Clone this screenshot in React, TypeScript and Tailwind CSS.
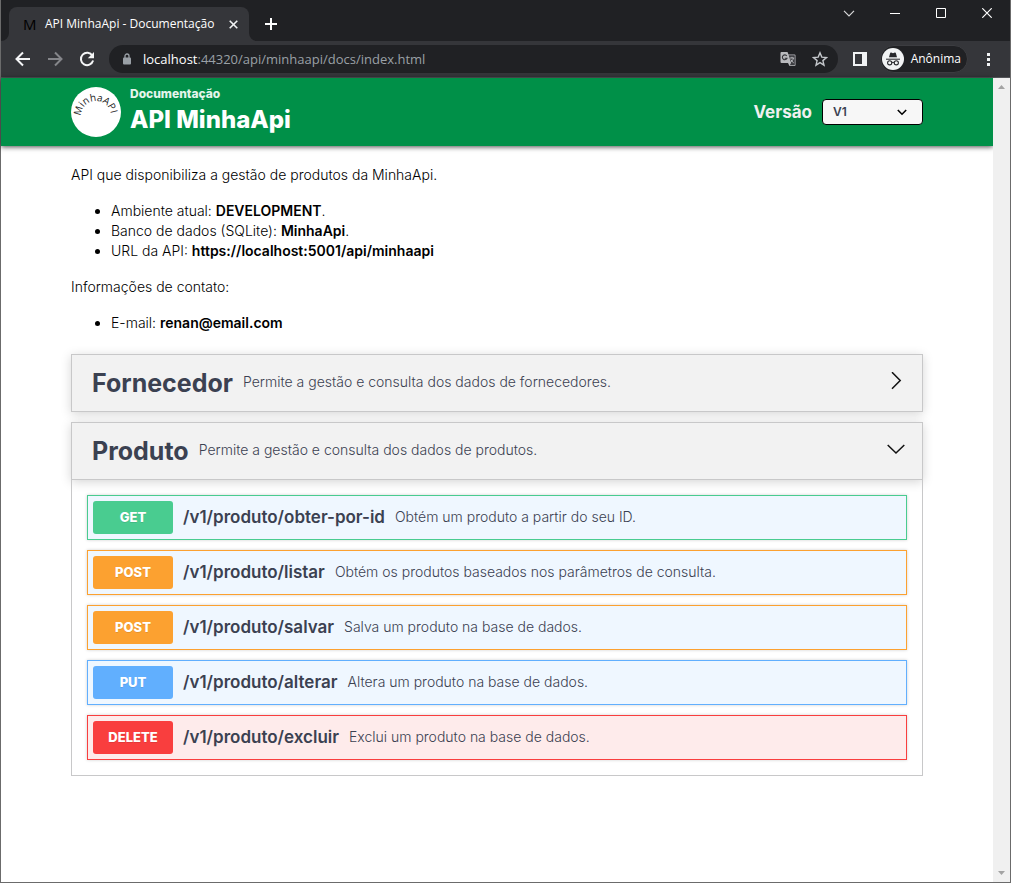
import React from "react";

const chromeFont = "font-['Open_Sans','Noto_Sans',sans-serif]";

type Operation = {
  method: string;
  path: string;
  summary: string;
  box: string;
  badge: string;
};

const operations: Operation[] = [
  {
    method: "GET",
    path: "/v1/produto/obter-por-id",
    summary: "Obtém um produto a partir do seu ID.",
    box: "border-[#49cc90] bg-[#eff7ff]",
    badge: "bg-[#49cc90]",
  },
  {
    method: "POST",
    path: "/v1/produto/listar",
    summary: "Obtém os produtos baseados nos parâmetros de consulta.",
    box: "border-[#fca130] bg-[#eff7ff]",
    badge: "bg-[#fca130]",
  },
  {
    method: "POST",
    path: "/v1/produto/salvar",
    summary: "Salva um produto na base de dados.",
    box: "border-[#fca130] bg-[#eff7ff]",
    badge: "bg-[#fca130]",
  },
  {
    method: "PUT",
    path: "/v1/produto/alterar",
    summary: "Altera um produto na base de dados.",
    box: "border-[#61affe] bg-[#eff7ff]",
    badge: "bg-[#61affe]",
  },
  {
    method: "DELETE",
    path: "/v1/produto/excluir",
    summary: "Exclui um produto na base de dados.",
    box: "border-[#f93e3e] bg-[#feebeb]",
    badge: "bg-[#f93e3e]",
  },
];

function TabStrip() {
  return (
    <div className="flex h-[41px] items-start justify-between bg-[#202124]">
      <div className="flex pl-2 pt-[7px]">
        <div className="relative flex h-[34px] w-60 items-center rounded-t-lg bg-[#35363a] pl-[14px] pr-2 text-white">
          <svg className="absolute -left-2 bottom-0 size-2" viewBox="0 0 8 8" aria-hidden="true">
            <path d="M8 0v8H0a8 8 0 0 0 8-8z" fill="#35363a" />
          </svg>
          <svg className="absolute -right-2 bottom-0 size-2" viewBox="0 0 8 8" aria-hidden="true">
            <path d="M0 0v8h8a8 8 0 0 1-8-8z" fill="#35363a" />
          </svg>
          <span className="w-[22px] text-[15px] leading-4 text-black">M</span>
          <span className="flex-1 whitespace-nowrap text-[12px] leading-4">API MinhaApi - Documentação</span>
          <button aria-label="Fechar guia" className="flex size-4 items-center justify-center">
            <svg className="size-[9px]" viewBox="0 0 9 9" stroke="#f1f3f4" strokeWidth="1.6">
              <path d="M.7.7l7.6 7.6M8.3.7L.7 8.3" />
            </svg>
          </button>
        </div>
        <button aria-label="Nova guia" className="ml-3 flex h-[34px] w-5 items-center justify-center">
          <svg className="size-3" viewBox="0 0 12 12" stroke="#fff" strokeWidth="2">
            <path d="M6 0v12M0 6h12" />
          </svg>
        </button>
      </div>
      <div className="flex h-[26px] items-center">
        <button aria-label="Pesquisar guias" className="flex w-[46px] justify-center">
          <svg className="h-[7px] w-3" viewBox="0 0 12 7" fill="none" stroke="#d8d9da" strokeWidth="1.2">
            <path d="M1 .8l5 5 5-5" />
          </svg>
        </button>
        <button aria-label="Minimizar" className="flex w-[46px] justify-center">
          <svg className="h-px w-[10px]" viewBox="0 0 10 1" fill="#fff">
            <path d="M0 0h10v1H0z" />
          </svg>
        </button>
        <button aria-label="Maximizar" className="flex w-[46px] justify-center">
          <svg className="size-[10px]" viewBox="0 0 10 10" fill="none" stroke="#fff">
            <path d="M.5.5h9v9h-9z" />
          </svg>
        </button>
        <button aria-label="Fechar" className="flex w-[46px] justify-center">
          <svg className="size-[10px]" viewBox="0 0 10 10" stroke="#fff" strokeWidth="1.2">
            <path d="M.3.3l9.4 9.4M9.7.3L.3 9.7" />
          </svg>
        </button>
      </div>
    </div>
  );
}

function Toolbar() {
  return (
    <div className="flex h-[37px] items-center border-b border-[#55565a] bg-[#35363a] pl-[14px] pr-[14px]">
      <div className="flex items-center gap-4">
        <button aria-label="Voltar">
          <svg className="size-4" viewBox="0 0 16 16" fill="none" stroke="#f5f6f7" strokeWidth="2">
            <path d="M15 8H2.5M8 1.5L1.5 8 8 14.500" />
          </svg>
        </button>
        <button aria-label="Avançar">
          <svg className="size-4" viewBox="0 0 16 16" fill="none" stroke="#85868a" strokeWidth="2">
            <path d="M1 8h12.500M8 1.500L14.500 8 8 14.500" />
          </svg>
        </button>
        <button aria-label="Recarregar">
          <svg className="size-4" viewBox="0 0 16 16">
            <path d="M13.400 4.700A6.200 6.200 0 1 0 14.100 9.600" fill="none" stroke="#f5f6f7" strokeWidth="2" />
            <path d="M15 1v6.200H8.800z" fill="#f5f6f7" />
          </svg>
        </button>
      </div>
      <div className="ml-[14px] flex h-7 flex-1 items-center rounded-full bg-[#202124] pl-[14px] pr-[10px]">
        <svg className="h-3 w-2" viewBox="0 0 8 12" aria-hidden="true">
          <path d="M2 5V3a2 2 0 0 1 4 0v2" fill="none" stroke="#9aa0a6" strokeWidth="1.300" />
          <rect y="4.500" width="8" height="7" rx="1" fill="#9aa0a6" />
        </svg>
        <div className="ml-3 flex-1 whitespace-nowrap text-[13px] leading-5 text-[#9aa0a6]">
          <span className="text-white">localhost</span>:44320/api/minhaapi/docs/index.html
        </div>
        <button aria-label="Traduzir esta página">
          <svg className="size-4" viewBox="0 0 16 16">
            <path d="M1.500 1h6l1 2.500h6a1 1 0 0 1 1 1V14a1 1 0 0 1-1 1h-5L8 12H1.500a1 1 0 0 1-1-1V2a1 1 0 0 1 1-1z" fill="#b9babd" />
            <path d="M8.700 4.300h5.600a.5.500 0 0 1 .5.500v8.900a.5.500 0 0 1-.5.500H9.800L11 12z" fill="#3c3d41" />
            <path d="M6.800 5A2.400 2.400 0 1 0 7 7.200H4.700" fill="none" stroke="#35363a" strokeWidth="1.100" />
            <path d="M9.800 7h4.400M12 5.800V7M13.400 7c-.3 2-1.600 3.500-3 4.300M10.800 8.500c.6 1.500 1.800 2.500 2.900 3.300" fill="none" stroke="#c4c5c8" strokeWidth=".9" />
          </svg>
        </button>
        <button aria-label="Adicionar aos favoritos" className="ml-4">
          <svg className="size-4" viewBox="0 0 16 16" fill="none" stroke="#c4c7cb" strokeWidth="1.400">
            <path d="M8 1.800l1.800 4.300 4.700.4-3.600 3.100 1.100 4.600L8 11.700l-4 2.500 1.100-4.600-3.600-3.100 4.700-.4z" />
          </svg>
        </button>
      </div>
      <button aria-label="Painel lateral" className="ml-[15px]">
        <svg className="size-[14px]" viewBox="0 0 14 14">
          <path d="M0 0h14v14H0z" fill="#f1f3f4" />
          <path d="M2 2h7v10H2z" fill="#35363a" />
        </svg>
      </button>
      <button className="ml-[13px] flex h-7 items-center gap-[7px] rounded-full border border-[#3c3d41] bg-[#202124] pl-px pr-[6px] text-[12px] leading-4 text-white">
        <svg className="size-[22px]" viewBox="0 0 22 22" aria-hidden="true">
          <circle cx="11" cy="11" r="11" fill="#f1f3f4" />
          <path d="M7 9.300l1.100-4.100c.1-.5.600-.8 1.100-.6l1.800.6 1.800-.6c.5-.2 1 .1 1.100.6L15 9.300z" fill="#27282c" />
          <path d="M4 11.200h14" stroke="#27282c" strokeWidth="1" />
          <g fill="none" stroke="#27282c" strokeWidth="1.100">
            <circle cx="7.700" cy="14.800" r="2.100" />
            <circle cx="14.300" cy="14.800" r="2.100" />
            <path d="M9.800 14.600q1.200-.8 2.400 0" />
          </g>
        </svg>
        Anônima
      </button>
      <button aria-label="Menu" className="ml-3 flex w-4 justify-center">
        <svg className="h-[13px] w-[3px]" viewBox="0 0 3 13" fill="#f1f3f4">
          <path d="M0 0h3v3H0zM0 5h3v3H0zM0 10h3v3H0z" />
        </svg>
      </button>
    </div>
  );
}

function Header() {
  return (
    <header className="flex h-[68px] shrink-0 items-center justify-between bg-[#009048] px-[70px] text-white shadow-[0_1px_5px_rgba(0,0,0,0.7)]">
      <div className="flex items-center gap-[9px]">
        <svg className="size-[50px]" viewBox="0 0 50 50" role="img" aria-label="MinhaAPI">
          <defs>
            <path id="logo-arc" d="M10 29A15 15 0 0 1 40 29V34" />
          </defs>
          <circle cx="25" cy="25" r="25" fill="#fff" />
          <text className="font-['Open_Sans',sans-serif] text-[10px]" fill="#222">
            <textPath href="#logo-arc">MinhaAPI</textPath>
          </text>
        </svg>
        <div className="flex flex-col gap-1 pb-1 font-extrabold">
          <span className="text-[12px] leading-4 text-[#e4f5ec]">Documentação</span>
          <h1 className="text-[24px] leading-7">API MinhaApi</h1>
        </div>
      </div>
      <div className="flex items-center gap-[10px]">
        <label htmlFor="version" className="text-[17px] font-bold leading-6 text-[#f0f0f0]">
          Versão
        </label>
        <div className="relative">
          <select
            id="version"
            className="block h-[26px] w-[101px] appearance-none rounded border border-black bg-[#f7f7f7] pl-[10px] text-[12px] font-semibold leading-4 text-[#3b4151]"
          >
            <option>V1</option>
          </select>
          <svg className="pointer-events-none absolute right-4 top-[10px] h-[7px] w-[10px]" viewBox="0 0 10 7" fill="none" stroke="#000" strokeWidth="1.600">
            <path d="M.8 1L5 5.200 9.200 1" />
          </svg>
        </div>
      </div>
    </header>
  );
}

function TagHeader({ name, text, open }: { name: string; text: string; open?: boolean }) {
  return (
    <button
      aria-expanded={!!open}
      className="flex h-[58px] w-full items-center border border-[#c8c8c9] bg-[#f2f2f2] pl-5 pr-[17px] text-left text-[#3b4151] shadow-[0_2px_10px_rgba(0,0,0,0.17)]"
    >
      <span className="text-[25px] font-bold leading-8">{name}</span>
      <span className="ml-[10px] flex-1 pb-0.5 text-[14px] font-light leading-5">{text}</span>
      <svg className="mb-1 size-[18px]" viewBox="0 0 18 18" fill="none" stroke="#111" strokeWidth="1.500">
        <path d={open ? "M.7 5L9 13 17.300 5" : "M5 .2L13.200 8.500 5 16.800"} />
      </svg>
    </button>
  );
}

function OperationRow({ op }: { op: Operation }) {
  return (
    <li>
      <button
        className={`flex h-[45px] w-full items-center border px-[5px] text-left text-[#3b4151] shadow-[0_0_3px_rgba(0,0,0,0.19)] ${op.box}`}
      >
        <span
          className={`flex h-[33px] w-20 items-center justify-center rounded-[3px] pb-0.5 text-[13px] font-extrabold leading-5 text-white [text-shadow:0_1px_0_rgba(0,0,0,0.1)] ${op.badge}`}
        >
          {op.method}
        </span>
        <span className="ml-[10px] pb-0.5 text-[17px] font-semibold leading-6">{op.path}</span>
        <span className="ml-[10px] pb-0.5 text-[14px] font-light leading-5">{op.summary}</span>
      </button>
    </li>
  );
}

function ScrollBar() {
  return (
    <div className="flex w-[17px] shrink-0 flex-col items-center justify-between bg-[#f0f0f0] py-[7px]" aria-hidden="true">
      <svg className="h-1 w-[7px]" viewBox="0 0 7 4" fill="#a3a3a3">
        <path d="M3.500 0L7 4H0z" />
      </svg>
      <svg className="h-1 w-[7px]" viewBox="0 0 7 4" fill="#a3a3a3">
        <path d="M3.500 4L7 0H0z" />
      </svg>
    </div>
  );
}

export default function App() {
  return (
    <div className="flex min-h-screen flex-col bg-white pb-px">
      <div className="flex flex-1 flex-col border-x border-b border-[#6b6b6b]">
        <div className={chromeFont}>
          <TabStrip />
          <Toolbar />
        </div>
        <div className="flex flex-1 font-['Inter',sans-serif]">
          <div className="flex min-w-0 flex-1 flex-col">
            <Header />
            <main className="px-[70px] pb-8 pt-[19px] text-[14px] leading-5 text-black">
              <div className="flex flex-col gap-4 font-light">
                <p>API que disponibiliza a gestão de produtos da MinhaApi.</p>
                <ul className="list-disc pl-10">
                  <li>Ambiente atual: <strong className="font-semibold">DEVELOPMENT</strong>.</li>
                  <li>Banco de dados (SQLite): <strong className="font-semibold">MinhaApi</strong>.</li>
                  <li>URL da API: <strong className="font-semibold">https://localhost:5001/api/minhaapi</strong></li>
                </ul>
                <p>Informações de contato:</p>
                <ul className="list-disc pl-10">
                  <li>E-mail: <strong className="font-semibold">renan@email.com</strong></li>
                </ul>
              </div>
              <div className="mt-[21px] flex flex-col gap-[10px]">
                <TagHeader name="Fornecedor" text="Permite a gestão e consulta dos dados de fornecedores." />
                <section>
                  <TagHeader name="Produto" text="Permite a gestão e consulta dos dados de produtos." open />
                  <ul className="flex flex-col gap-[10px] border-x border-b border-[#c8c8c9] p-[15px]">
                    {operations.map((op) => (
                      <OperationRow key={op.path} op={op} />
                    ))}
                  </ul>
                </section>
              </div>
            </main>
          </div>
          <ScrollBar />
        </div>
      </div>
    </div>
  );
}
